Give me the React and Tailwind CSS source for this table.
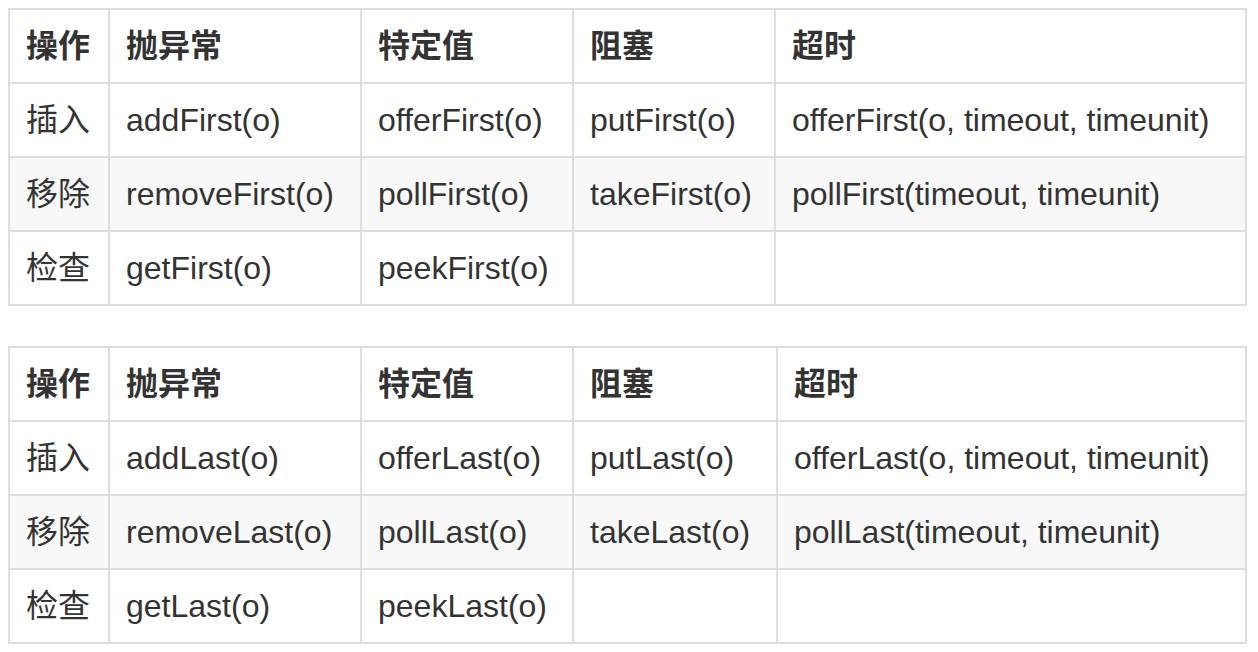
import React from "react";

const font = { fontFamily: '"Liberation Sans", "Noto Sans CJK SC", sans-serif' };

function Table({ suffix, cols, timeoutWord }) {
  const header = ["操作", "抛异常", "特定值", "阻塞", "超时"];
  const rows = [
    ["插入", `add${suffix}(o)`, `offer${suffix}(o)`, `put${suffix}(o)`, `offer${suffix}(o, timeout, timeunit)`],
    ["移除", `remove${suffix}(o)`, `poll${suffix}(o)`, `take${suffix}(o)`, `poll${suffix}(timeout, timeunit)`],
    ["检查", `get${suffix}(o)`, `peek${suffix}(o)`, "", ""],
  ];
  return (
    <div className={`grid ${cols} w-[1239px] border-l-2 border-t-2 border-[#dddddd]`}>
      {header.map((h, i) => (
        <div
          key={"h" + i}
          className="border-r-2 border-b-2 border-[#dddddd] px-4 py-4 text-[32px] leading-[40px] font-bold text-[#333333] whitespace-nowrap"
        >
          {h}
        </div>
      ))}
      {rows.map((r, ri) =>
        r.map((c, ci) => (
          <div
            key={ri + "-" + ci}
            className={`border-r-2 border-b-2 border-[#dddddd] px-4 py-4 text-[32px] leading-[40px] text-[#333333] whitespace-nowrap ${
              ri === 1 ? "bg-[#f8f8f8]" : "bg-white"
            }`}
          >
            {c || "\u00a0"}
          </div>
        ))
      )}
    </div>
  );
}

export default function App() {
  return (
    <div className="bg-white min-h-[652px] pt-2 pl-2 flex flex-col gap-10" style={font}>
      <Table suffix="First" cols="grid-cols-[100px_252px_212px_202px_471px]" />
      <Table suffix="Last" cols="grid-cols-[100px_252px_212px_204px_469px]" />
    </div>
  );
}
